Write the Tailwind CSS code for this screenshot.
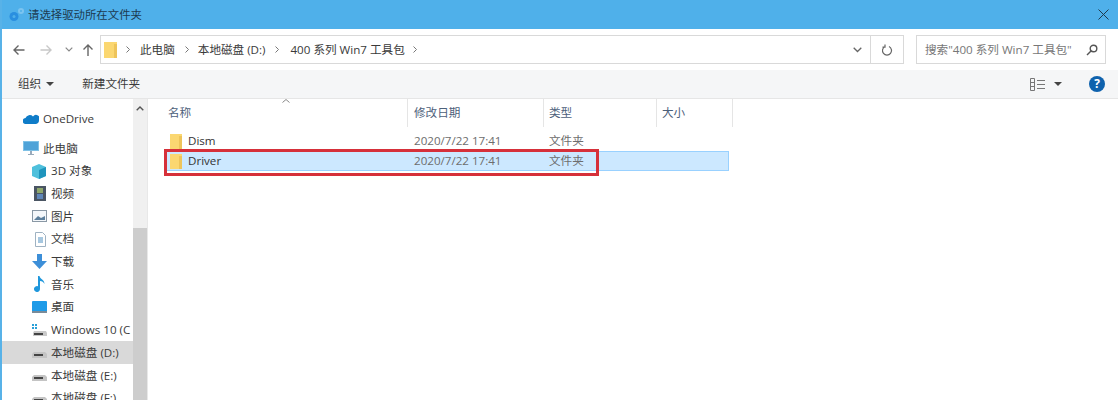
<!DOCTYPE html>
<html lang="zh-CN">

<head>
    <meta charset="UTF-8">
    <meta name="viewport" content="width=device-width, initial-scale=1.0">
    <script src="https://cdn.jsdelivr.net/npm/@tailwindcss/browser@4"></script>
    <title>请选择驱动所在文件夹</title>
</head>

<body class="h-[400px] w-[1118px] overflow-hidden bg-white font-['Open_Sans','Noto_Sans_CJK_SC',sans-serif] text-[11.6px] text-[#3a3a3a]">
    <div class="flex h-full flex-col border-l-2 border-[#58b2e8]">
        <!-- title bar -->
        <header class="flex h-[29px] shrink-0 items-center bg-[#4fb0ea] pl-[7px] pr-[9px]">
            <svg class="h-[15px] w-[16px]" viewBox="0 0 16 15">
                <circle cx="5" cy="9.5" r="4.5" fill="#2a8fe0" />
                <circle cx="5" cy="9.5" r="1.5" fill="#4fb0ea" />
                <circle cx="12" cy="4" r="3" fill="#7cc4f0" />
                <circle cx="12" cy="4" r="1" fill="#4fb0ea" />
            </svg>
            <span class="ml-[3px] text-[11.4px] text-[#1c3a50]">请选择驱动所在文件夹</span>
            <svg class="ml-auto h-[11px] w-[11px]" viewBox="0 0 11 11" fill="none" stroke="#1f3a4d" stroke-width="1">
                <path d="M.5.5l10 10M10.5.5l-10 10" />
            </svg>
        </header>

        <!-- address row -->
        <nav class="flex h-[41px] shrink-0 items-center">
            <svg class="ml-[11px] h-[12px] w-[12px]" viewBox="0 0 12 12" fill="none" stroke="#666" stroke-width="1.4">
                <path d="M11.5 6H1M5.5 1.5L1 6l4.5 4.5" />
            </svg>
            <svg class="ml-[15px] h-[12px] w-[12px]" viewBox="0 0 12 12" fill="none" stroke="#c8c8c8" stroke-width="1.4">
                <path d="M.5 6H11M6.5 1.5L11 6l-4.5 4.5" />
            </svg>
            <svg class="ml-[13px] h-[5px] w-[8px]" viewBox="0 0 8 5" fill="none" stroke="#888" stroke-width="1.2">
                <path d="M.7.7L4 4l3.3-3.3" />
            </svg>
            <svg class="ml-[9px] h-[12px] w-[12px]" viewBox="0 0 12 12" fill="none" stroke="#666" stroke-width="1.4">
                <path d="M6 12V1M1.5 5.5L6 1l4.5 4.5" />
            </svg>
            <div class="ml-[6px] flex h-[29px] w-[771px] items-center border border-[#d9d9d9] pl-[3px]">
                <svg class="h-[16px] w-[13px]" viewBox="0 0 13 16">
                    <rect width="13" height="16" fill="#fbd771" />
                    <rect x="10" y="2" width="3" height="14" fill="#eec45a" />
                </svg>
                <svg class="ml-[9px] h-[7px] w-[4px]" viewBox="0 0 4 7" fill="none" stroke="#777"><path d="M.5.5l3 3-3 3" /></svg>
                <span class="ml-[10px]">此电脑</span>
                <svg class="ml-[10px] h-[7px] w-[4px]" viewBox="0 0 4 7" fill="none" stroke="#777"><path d="M.5.5l3 3-3 3" /></svg>
                <span class="ml-[9px]">本地磁盘 (D:)</span>
                <svg class="ml-[10px] h-[7px] w-[4px]" viewBox="0 0 4 7" fill="none" stroke="#777"><path d="M.5.5l3 3-3 3" /></svg>
                <span class="ml-[11px]">400 系列 Win7 工具包</span>
                <svg class="ml-[8px] h-[7px] w-[4px]" viewBox="0 0 4 7" fill="none" stroke="#777"><path d="M.5.5l3 3-3 3" /></svg>
                <svg class="ml-auto mr-[8px] h-[6px] w-[9px]" viewBox="0 0 9 6" fill="none" stroke="#666" stroke-width="1.3"><path d="M.7.7L4.5 4.5 8.3.7" /></svg>
            </div>
            <div class="flex h-[29px] w-[33px] items-center justify-center border border-l-0 border-[#d9d9d9]">
                <svg class="h-[12px] w-[11px]" viewBox="0 0 11 12" fill="none" stroke="#666" stroke-width="1.2">
                    <path d="M3 2.5a4.5 4.5 0 1 0 4 0M3 .5v2.6H.5" />
                </svg>
            </div>
            <div class="ml-[12px] flex h-[29px] w-[190px] items-center border border-[#d9d9d9] pl-[8px] pr-[7px] text-[#777]">
                <span class="whitespace-nowrap">搜索"400 系列 Win7 工具包"</span>
                <svg class="ml-auto h-[12px] w-[12px]" viewBox="0 0 12 12" fill="none" stroke="#555" stroke-width="1.4">
                    <circle cx="7.5" cy="4.5" r="3.3" /><path d="M5 7l-4 4" />
                </svg>
            </div>
        </nav>

        <!-- toolbar -->
        <div class="flex h-[29px] shrink-0 items-center border-b border-[#e6e6e6] bg-[#f5f6f7] pl-[16px]">
            <span>组织</span>
            <span class="ml-[5px] border-x-[4px] border-t-[4px] border-x-transparent border-t-[#444]"></span>
            <span class="ml-[28px]">新建文件夹</span>
            <svg class="ml-auto h-[13px] w-[16px]" viewBox="0 0 16 13" fill="none" stroke="#777">
                <path d="M.5.5h4v12h-4zM.5 4.5h4M.5 8.5h4M7 2.500h8M7 6.500h8M7 10.500h8" />
            </svg>
            <span class="ml-[8px] border-x-[4px] border-t-[4px] border-x-transparent border-t-[#444]"></span>
            <span class="ml-[27px] mr-[13px] flex h-[16px] w-[16px] items-center justify-center rounded-full bg-[#0f62ad] text-[12px] font-bold text-white">?</span>
        </div>

        <div class="flex min-h-0 flex-1">
            <!-- sidebar -->
            <aside class="relative w-[146px] shrink-0 overflow-hidden border-r border-[#e8e8e8]">
                <div class="absolute inset-y-0 right-0 w-[14px] bg-[#f0f0f0]">
                    <svg class="absolute left-[3px] top-[7px] h-[5px] w-[8px]" viewBox="0 0 8 5" fill="none" stroke="#555" stroke-width="1.4"><path d="M.7 4.3L4 1l3.300 3.300" /></svg>
                    <div class="absolute inset-x-0 top-[129px] bottom-0 bg-[#cdcdcd]"></div>
                </div>

                <ul class="w-[131px] pt-[9px]">
                    <li class="flex h-[22px] items-center pl-[21px]">
                        <svg class="h-[10px] w-[16px]" viewBox="0 0 16 10"><path d="M3 10a3 3 0 0 1-.5-6A4.500 4.500 0 0 1 10 2.500a3.500 3.500 0 0 1 6 4 3.500 3.500 0 0 1-3 3.500z" fill="#0f7cc8" /></svg>
                        <span class="ml-[4px] whitespace-nowrap">OneDrive</span>
                    </li>
                    <li class="mt-[7px] flex h-[22.7px] items-center pl-[21px]">
                        <svg class="h-[14px] w-[16px]" viewBox="0 0 16 14"><rect width="16" height="10" fill="#7fc1e6" /><rect x="1" y="1" width="14" height="8" fill="#4fa3d8" /><path d="M5 13h6v1H5zM7 10h2v3H7z" fill="#9ab" /></svg>
                        <span class="ml-[4px] whitespace-nowrap">此电脑</span>
                    </li>
                    <li class="flex h-[22.7px] items-center pl-[29px]">
                        <svg class="h-[15px] w-[16px]" viewBox="0 0 16 15"><path d="M8 0l7 3v9l-7 3-7-3V3z" fill="#4fc0dc" /><path d="M8 6l7-3v9l-7 3z" fill="#1f95bd" /></svg>
                        <span class="ml-[4px] whitespace-nowrap">3D 对象</span>
                    </li>
                    <li class="flex h-[22.7px] items-center pl-[32px]">
                        <svg class="h-[15px] w-[12px]" viewBox="0 0 12 15"><rect width="12" height="15" fill="#4a5563" /><rect x="3" y="2" width="6" height="5" fill="#8fa86c" /><rect x="3" y="8" width="6" height="5" fill="#5f86b8" /></svg>
                        <span class="ml-[5px] whitespace-nowrap">视频</span>
                    </li>
                    <li class="flex h-[22.7px] items-center pl-[30px]">
                        <svg class="h-[12px] w-[15px]" viewBox="0 0 15 12"><rect x=".5" y=".5" width="14" height="11" fill="#f4f7fa" stroke="#8a98a5" /><path d="M2 10l4-4 3 2 4-2v4z" fill="#5d7f9c" /></svg>
                        <span class="ml-[4px] whitespace-nowrap">图片</span>
                    </li>
                    <li class="flex h-[22.7px] items-center pl-[33px]">
                        <svg class="h-[15px] w-[11px]" viewBox="0 0 11 15" fill="none"><path d="M.5.5h7l3 3v11H.5z" fill="#fff" stroke="#9fb2c2" /><path d="M3 6h5M3 8h5M3 10h5" stroke="#4f8fc0" /></svg>
                        <span class="ml-[5px] whitespace-nowrap">文档</span>
                    </li>
                    <li class="flex h-[22.7px] items-center pl-[30px]">
                        <svg class="h-[15px] w-[15px]" viewBox="0 0 15 15"><path d="M5 0h5v7h5l-7.500 8L0 7h5z" fill="#3d8fd8" /></svg>
                        <span class="ml-[4px] whitespace-nowrap">下载</span>
                    </li>
                    <li class="flex h-[22.7px] items-center pl-[32px]">
                        <svg class="h-[16px] w-[11px]" viewBox="0 0 11 16"><path d="M4 0h1.500c.5 3 5 3.500 5 8-1-2-2.500-3-4.500-3v8a3 3 0 1 1-2-2.800z" fill="#1f97dc" /></svg>
                        <span class="ml-[6px] whitespace-nowrap">音乐</span>
                    </li>
                    <li class="flex h-[22.7px] items-center pl-[30px]">
                        <svg class="h-[12px] w-[15px]" viewBox="0 0 15 12"><rect width="15" height="11" rx="1" fill="#1e9be8" /><rect y="10" width="15" height="2" fill="#7a8b99" /></svg>
                        <span class="ml-[4px] whitespace-nowrap">桌面</span>
                    </li>
                    <li class="flex h-[22.7px] items-center pl-[29px]">
                        <svg class="h-[13px] w-[16px] shrink-0" viewBox="0 0 16 13"><path d="M1 1h2v2H1zM4 1h2v2H4zM1 4h2v2H1zM4 4h2v2H4z" fill="#2aa0d8" /><path d="M3 8h12l1 2v3H2v-3z" fill="#c9c9c9" /><rect x="3" y="10" width="9" height="2" fill="#444" /></svg>
                        <span class="ml-[4px] whitespace-nowrap">Windows 10 (C</span>
                    </li>
                    <li class="flex h-[22.7px] items-center bg-[#d9d9d9] pl-[30px]">
                        <svg class="mt-[5px] h-[6px] w-[15px]" viewBox="0 0 15 6"><path d="M2 0h11l2 2v4H0V2z" fill="#c4c4c4" /><rect x="2" y="2" width="9" height="2" fill="#444" /></svg>
                        <span class="ml-[4px] whitespace-nowrap">本地磁盘 (D:)</span>
                    </li>
                    <li class="flex h-[22.7px] items-center pl-[30px]">
                        <svg class="mt-[5px] h-[6px] w-[15px]" viewBox="0 0 15 6"><path d="M2 0h11l2 2v4H0V2z" fill="#c4c4c4" /><rect x="2" y="2" width="9" height="2" fill="#444" /></svg>
                        <span class="ml-[4px] whitespace-nowrap">本地磁盘 (E:)</span>
                    </li>
                    <li class="flex h-[22.7px] items-center pl-[30px]">
                        <svg class="mt-[5px] h-[6px] w-[15px]" viewBox="0 0 15 6"><path d="M2 0h11l2 2v4H0V2z" fill="#c4c4c4" /><rect x="2" y="2" width="9" height="2" fill="#444" /></svg>
                        <span class="ml-[4px] whitespace-nowrap">本地磁盘 (F:)</span>
                    </li>
                </ul>
            </aside>

            <!-- file list -->
            <main class="relative flex-1 pl-[17px]">
                <div class="flex h-[28px] w-[568px] items-center text-[#4c607a]">
                    <div class="relative flex h-full w-[243px] items-center border-r border-[#e5e5e5] pl-[3px]">
                        名称
                        <svg class="absolute left-[117px] top-0 h-[4px] w-[8px]" viewBox="0 0 8 4" fill="none" stroke="#888"><path d="M.5 3.500L4 .5l3.500 3" /></svg>
                    </div>
                    <div class="flex h-full w-[136px] items-center border-r border-[#e5e5e5] pl-[6px]">修改日期</div>
                    <div class="flex h-full w-[113px] items-center border-r border-[#e5e5e5] pl-[5px]">类型</div>
                    <div class="flex h-full w-[76px] items-center border-r border-[#e5e5e5] pl-[5px]">大小</div>
                </div>

                <div class="mt-[4px] flex h-[20px] w-[564px] items-center text-[#6d6d6d]">
                    <svg class="ml-[5px] h-[15px] w-[12px]" viewBox="0 0 12 15"><rect width="12" height="15" fill="#fbd771" /><rect x="9" y="2" width="3" height="13" fill="#eec45a" /></svg>
                    <span class="ml-[6px] w-[226px] text-[#333]">Dism</span>
                    <span class="w-[135px]">2020/7/22 17:41</span>
                    <span>文件夹</span>
                </div>
                <div class="flex h-[20px] w-[564px] items-center border border-[#99d1ff] bg-[#cce8ff] text-[#6d6d6d]">
                    <svg class="ml-[4px] h-[15px] w-[12px]" viewBox="0 0 12 15"><rect width="12" height="15" fill="#fbd771" /><rect x="9" y="2" width="3" height="13" fill="#eec45a" /></svg>
                    <span class="ml-[6px] w-[226px] text-[#333]">Driver</span>
                    <span class="w-[135px]">2020/7/22 17:41</span>
                    <span>文件夹</span>
                </div>

                <!-- red annotation box -->
                <div class="absolute left-[16px] top-[50px] h-[27px] w-[435px] border-[3px] border-[#d6303a]"></div>
            </main>
        </div>
    </div>
</body>

</html>
